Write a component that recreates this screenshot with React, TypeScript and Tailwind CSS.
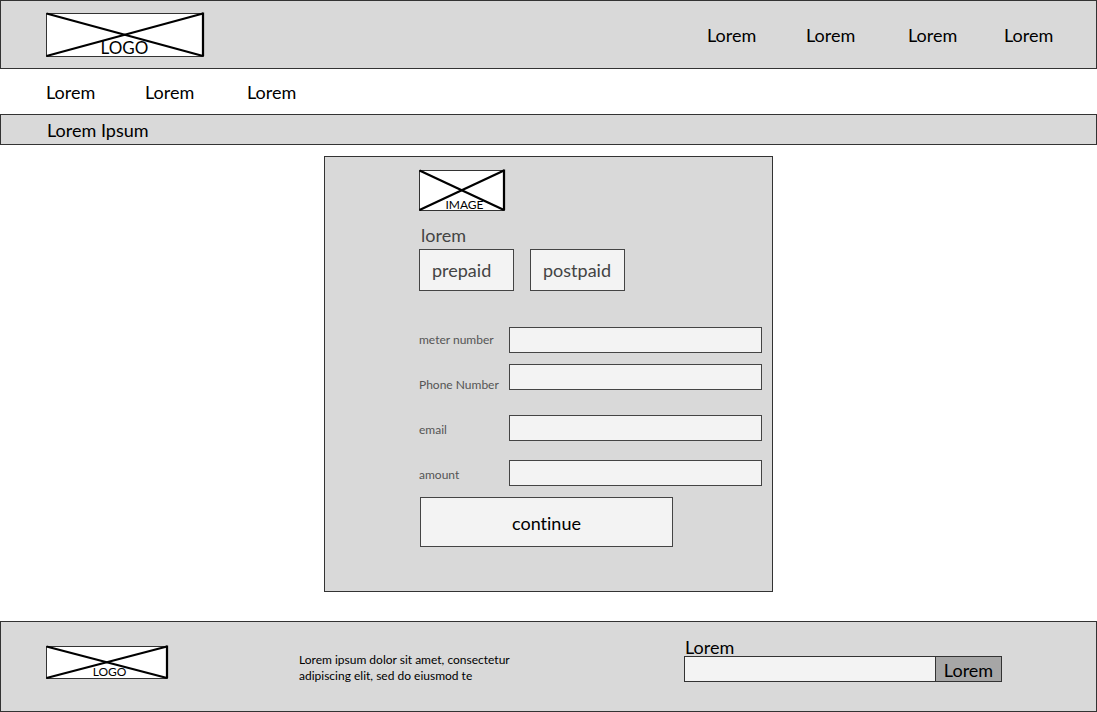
type PlaceholderProps = {
  label: string;
  boxClass: string;
  labelClass: string;
};

function Placeholder({ label, boxClass, labelClass }: PlaceholderProps) {
  return (
    <div className={`relative shrink-0 ${boxClass}`}>
      <svg className="block h-full w-full overflow-visible" aria-hidden="true">
        <rect x="0.5" y="0.5" width="100%" height="100%" fill="#fff" stroke="#333" strokeWidth="1" />
        <g stroke="#000" strokeWidth="2.25">
          <line x1="0.5" y1="0.5" x2="100%" y2="100%" />
          <line x1="0.5" y1="100%" x2="100%" y2="0.5" />
          <line x1="100%" y1="-0.5" x2="100%" y2="100%" />
        </g>
      </svg>
      <span className={`absolute inset-x-0 bottom-0 text-center ${labelClass}`}>{label}</span>
    </div>
  );
}

const fields = [
  { id: "meter", label: "meter number", type: "text", align: "pt-[10px]" },
  { id: "phone", label: "Phone Number", type: "tel", align: "pt-0.5" },
  { id: "email", label: "email", type: "email", align: "pt-2" },
  { id: "amount", label: "amount", type: "text", align: "pt-2" },
];

export default function App() {
  return (
    <div className="flex min-h-screen flex-col bg-white font-['Lato',sans-serif] text-lg leading-6 text-black [font-variant-ligatures:none]">
      <header className="flex h-[69px] items-center justify-between border border-[#333] bg-[#d9d9d9] pr-[43px] pl-[45px]">
        <Placeholder label="LOGO" boxClass="h-[43px] w-[157px]" labelClass="text-[17px] leading-4" />
        <nav className="grid grid-cols-[99px_102px_96px_49px]">
          <a href="#">Lorem</a>
          <a href="#">Lorem</a>
          <a href="#">Lorem</a>
          <a href="#">Lorem</a>
        </nav>
      </header>

      <nav className="grid h-[45px] grid-cols-[99px_102px_96px] items-center pl-[46px]">
        <a href="#">Lorem</a>
        <a href="#">Lorem</a>
        <a href="#">Lorem</a>
      </nav>

      <div className="flex h-[31px] items-center border border-[#333] bg-[#d9d9d9] pl-[46px]">
        <h1>Lorem Ipsum</h1>
      </div>

      <main className="px-4 pt-[11px] pb-[29px]">
        <form className="mx-auto flex w-full max-w-[449px] flex-col border border-[#333] bg-[#d9d9d9] pt-[13px] pr-[10px] pb-11 pl-[94px]">
          <Placeholder label="IMAGE" boxClass="h-[40px] w-[85px]" labelClass="pl-1.5 text-xs leading-[10px]" />
          <fieldset className="mt-[13px] text-[#444]">
            <legend className="h-[26px] pl-0.5">lorem</legend>
            <div className="flex gap-4">
              <button type="button" className="h-[42px] w-[95px] border border-[#444] bg-[#f3f3f3] pl-3 text-left">
                prepaid
              </button>
              <button type="button" className="h-[42px] w-[95px] border border-[#444] bg-[#f3f3f3] pl-3 text-left">
                postpaid
              </button>
            </div>
          </fieldset>

          <div className="mt-[26px] text-xs text-[#555]">
            {fields.map((f) => (
              <div key={f.id} className="flex h-[45px]">
                <label htmlFor={f.id} className="w-[90px] shrink-0 leading-[45px]">
                  {f.label}
                </label>
                <div className={`min-w-0 flex-1 ${f.align}`}>
                  <input id={f.id} type={f.type} className="block h-[26px] w-full border border-[#444] bg-[#f3f3f3] px-2" />
                </div>
              </div>
            ))}
          </div>

          <button type="submit" className="ml-px h-[50px] w-[253px] border border-[#444] bg-[#f3f3f3] pt-0.5">
            continue
          </button>
        </form>
      </main>

      <footer className="grid h-[91px] grid-cols-[253fr_385fr_412fr] border border-[#333] bg-[#d9d9d9] pl-[45px]">
        <div className="pt-6">
          <Placeholder label="LOGO" boxClass="h-[32px] w-[121px]" labelClass="pl-1.5 text-xs leading-3" />
        </div>
        <p className="pt-[30px] text-xs leading-4">
          Lorem ipsum dolor sit amet, consectetur
          <br />
          adipiscing elit, sed do eiusmod te
        </p>
        <form className="pt-4">
          <label htmlFor="subscribe" className="block h-[18px] pl-px leading-[18px]">
            Lorem
          </label>
          <div className="flex">
            <input id="subscribe" type="text" className="h-[26px] w-[252px] border border-[#333] bg-[#f3f3f3] px-2" />
            <button type="button" className="-ml-px flex h-[26px] w-[67px] items-center justify-center border border-[#333] bg-[#a6a6a6] pt-0.5">
              Lorem
            </button>
          </div>
        </form>
      </footer>
    </div>
  );
}
